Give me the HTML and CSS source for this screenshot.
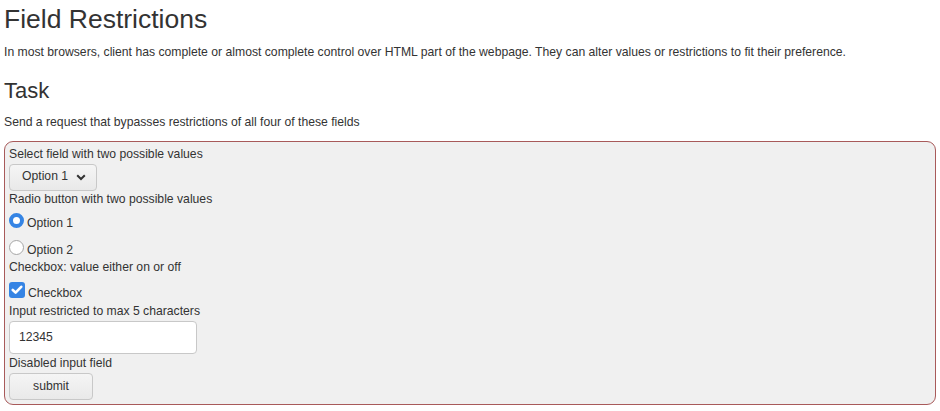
FILE: index.html
```html
<!DOCTYPE html>
<html>
<head>
<meta charset="utf-8">
<link rel="stylesheet" href="styles.css">
</head>
<body>
<h1 class="title">Field Restrictions</h1>
<p class="text intro">In most browsers, client has complete or almost complete control over HTML part of the webpage. They can alter values or restrictions to fit their preference.</p>
<h2 class="subtitle">Task</h2>
<p class="text task">Send a request that bypasses restrictions of all four of these fields</p>
<form class="box">
  <div class="label first">Select field with two possible values</div>
  <div class="select"><span>Option 1</span>
    <svg class="chev" width="10" height="7" viewBox="0 0 10 7"><path d="M1.2 1.2 L5 5 L8.8 1.2" fill="none" stroke="#333" stroke-width="2"/></svg>
  </div>
  <div class="label after-select">Radio button with two possible values</div>
  <div class="choice first-choice"><span class="radio checked"></span><span class="choice-text">Option 1</span></div>
  <div class="choice"><span class="radio"></span><span class="choice-text">Option 2</span></div>
  <div class="label after-choice">Checkbox: value either on or off</div>
  <div class="choice check-row"><span class="checkbox"><svg width="12" height="10" viewBox="0 0 12 10"><path d="M1.8 5 L4.6 7.6 L10.2 1.8" fill="none" stroke="#fff" stroke-width="2.6" stroke-linecap="round" stroke-linejoin="round"/></svg></span><span class="choice-text">Checkbox</span></div>
  <div class="label">Input restricted to max 5 characters</div>
  <div class="input">12345</div>
  <div class="label tight">Disabled input field</div>
  <div class="button">submit</div>
</form>
</body>
</html>
```
FILE: styles.css
```css
body {
  margin: 0;
  padding: 0 4px;
  font-family: "Liberation Sans", Arial, sans-serif;
  font-size: 12.2px;
  color: #333;
  background: #fff;
}
.title {
  font-size: 26.5px;
  font-weight: normal;
  margin: 0;
  padding-top: 4px;
  line-height: 30px;
}
.text {
  margin: 0;
  line-height: 17px;
}
.intro {
  margin-top: 10px;
}
.subtitle {
  font-size: 22px;
  font-weight: normal;
  margin: 17px 0 0;
  line-height: 26px;
}
.task {
  margin-top: 10px;
}
.box {
  margin: 10px 0 0;
  background: #f0f0f0;
  border: 1px solid #a85a5a;
  border-radius: 9px;
  padding: 5px 4px 4px 4px;
  width: 922px;
  display: flex;
  flex-direction: column;
  align-items: flex-start;
}
.label {
  line-height: 14px;
}
.after-select {
  margin-top: 1px;
}
.after-choice {
  margin-top: 1px;
}
.tight {
  margin-top: 2px;
}
.select {
  margin-top: 3px;
  height: 27px;
  width: 88px;
  box-sizing: border-box;
  border: 1px solid #c8c8c8;
  border-radius: 4px;
  background: linear-gradient(#f5f5f5, #e9e9e9);
  display: flex;
  align-items: center;
  padding-left: 12px;
  gap: 8px;
  line-height: 20px;
}
.select span {
  padding-bottom: 3px;
}
.chev {
  margin-top: -1px;
}
.choice {
  display: flex;
  align-items: flex-start;
  height: 26px;
}
.first-choice {
  height: 27px;
}
.choice-text {
  line-height: 14px;
  padding-top: 10px;
}
.radio {
  width: 15px;
  height: 15px;
  box-sizing: border-box;
  border-radius: 50%;
  border: 1px solid #a6a6a6;
  background: #fff;
  margin: 7px 3px 0 0;
}
.radio.checked {
  border: 4.5px solid #3584e4;
}
.check-row {
  height: 30px;
}
.checkbox {
  width: 16px;
  height: 16px;
  border-radius: 3px;
  background: #3584e4;
  display: flex;
  align-items: center;
  justify-content: center;
  margin: 8px 3px 0 0;
}
.check-row .choice-text {
  padding-top: 12px;
}
.input {
  margin-top: 3px;
  width: 188px;
  height: 33px;
  box-sizing: border-box;
  border: 1px solid #c8c8c8;
  border-radius: 4px;
  background: #fff;
  padding-left: 9px;
  line-height: 31px;
}
.button {
  margin-top: 3px;
  width: 84px;
  height: 27px;
  box-sizing: border-box;
  border: 1px solid #c8c8c8;
  border-radius: 4px;
  background: linear-gradient(#f5f5f5, #e9e9e9);
  text-align: center;
  line-height: 24px;
}
```
